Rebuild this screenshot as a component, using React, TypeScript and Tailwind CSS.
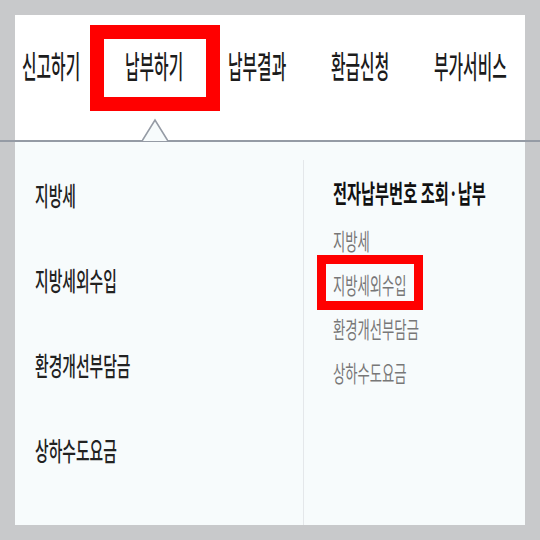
import React from 'react';

const NAV = ['신고하기', '납부하기', '납부결과', '환급신청', '부가서비스'];
const LEFT = ['지방세', '지방세외수입', '환경개선부담금', '상하수도요금'];
const SUB = ['지방세', '지방세외수입', '환경개선부담금', '상하수도요금'];

export default function App() {
  return (
    <div className="relative w-[540px] h-[540px] overflow-hidden bg-[#c8c9cb] p-[15px] font-['Noto_Sans_CJK_KR','Noto_Sans',sans-serif]">
      <div className="flex flex-col w-[510px] h-[510px]">
        {/* 상단 메뉴 */}
        <div className="h-[126px] shrink-0 bg-white flex pl-[7px] pt-[34px]">
          {NAV.map((item) => (
            <div key={item} className="w-[103px] h-[32px] leading-none">
              <span className="inline-block whitespace-nowrap origin-left scale-x-[0.51] text-[31px] font-medium text-[#1c1c1c]">
                {item}
              </span>
            </div>
          ))}
        </div>

        {/* 드롭다운 패널 */}
        <div className="flex-1 flex bg-[#f7fbfc]">
          <div className="w-[288px] shrink-0 flex flex-col gap-[59px] pl-[20px] pt-[41px]">
            {LEFT.map((item) => (
              <div key={item} className="h-[26px] leading-none">
                <span className="inline-block whitespace-nowrap origin-left scale-x-[0.57] text-[26px] font-medium text-[#222]">
                  {item}
                </span>
              </div>
            ))}
          </div>
          <div className="w-px shrink-0 self-stretch mt-[19px] bg-[#e4e7ea]" />
          <div className="flex-1 min-w-0 flex flex-col pl-[29px] pt-[39px]">
            <div className="h-[26px] leading-none">
              <span className="inline-block whitespace-nowrap origin-left scale-x-[0.61] text-[25px] font-bold text-[#111]">
                전자납부번호 조회·납부
              </span>
            </div>
            <div className="flex flex-col gap-[20px] mt-[23px]">
              {SUB.map((item) => (
                <div key={item} className="h-[24px] leading-none">
                  <span className="inline-block whitespace-nowrap origin-left scale-x-[0.58] text-[23px] text-[#777]">
                    {item}
                  </span>
                </div>
              ))}
            </div>
          </div>
        </div>
      </div>

      {/* 구분선 + 말풍선 꼭지 */}
      <div className="absolute left-0 top-[140px] w-[540px] h-[2px] bg-[#959ba5]" />
      <svg className="absolute left-[142px] top-[118px]" width="26" height="25" viewBox="0 0 26 25">
        <polygon points="0,23 13,2 26,23" fill="#f7fbfc" />
        <polyline points="0,23 13,2 26,23" fill="none" stroke="#959ba5" strokeWidth="1.6" />
      </svg>

      {/* 강조 표시 */}
      <div className="absolute left-[90px] top-[25px] w-[130px] h-[86px] border-[14px] border-[#f00]" />
      <div className="absolute left-[317px] top-[255px] w-[106px] h-[55px] border-[9px] border-[#f00]" />
    </div>
  );
}
